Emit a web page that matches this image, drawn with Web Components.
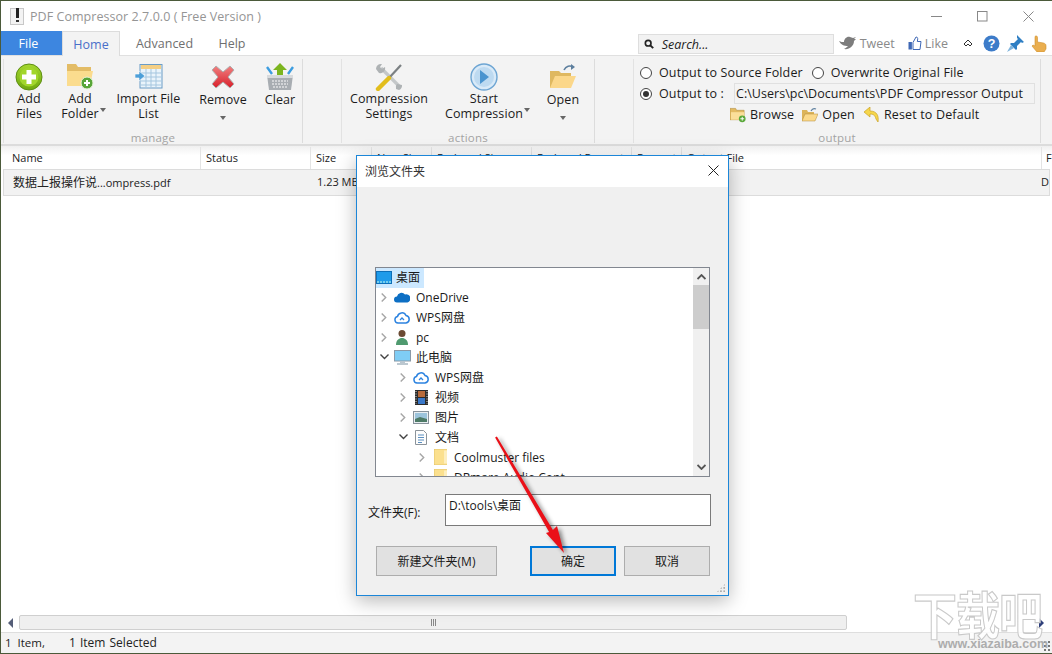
<!DOCTYPE html>
<html><head><meta charset="utf-8">
<style>
html,body{margin:0;padding:0;width:1052px;height:654px;overflow:hidden;background:#fff}
body{font-family:"Open Sans","Noto Sans CJK SC",sans-serif}
</style></head><body>
<pdf-app>
  <title-bar slot="title">PDF Compressor 2.7.0.0 ( Free Version )</title-bar>
  <ribbon-tabs slot="tabs"></ribbon-tabs>
  <ribbon-bar slot="ribbon"></ribbon-bar>
  <file-table slot="table"></file-table>
  <h-scroll slot="scroll"></h-scroll>
  <status-bar slot="status"></status-bar>
  <folder-dialog slot="overlay"></folder-dialog>
  <site-mark slot="overlay"></site-mark>
  <red-arrow slot="overlay"></red-arrow>
</pdf-app>
<script>
const FONT = `"Open Sans","Noto Sans CJK SC",sans-serif`;

const ICONS = {
  add: `<svg width="28" height="28" viewBox="0 0 28 28"><defs><linearGradient id="g1" x1="0" y1="0" x2="0" y2="1"><stop offset="0" stop-color="#a5d82f"/><stop offset="1" stop-color="#6fa80f"/></linearGradient></defs><circle cx="14" cy="14" r="13" fill="url(#g1)" stroke="#5e8e12"/><circle cx="14" cy="14" r="9.5" fill="#a2d62c"/><path d="M14 7v14M7 14h14" stroke="#fff" stroke-width="5"/></svg>`,
  addFolder: `<svg width="28" height="27" viewBox="0 0 28 27"><path d="M1 1h9l2 3h13v18H1z" fill="#e3bc66"/><path d="M1 8h26l-3 15H1z" fill="#fbdc8e"/><circle cx="21" cy="20" r="6" fill="#57a538" stroke="#e8f2d8"/><path d="M21 17v6M18 20h6" stroke="#fff" stroke-width="2"/></svg>`,
  import: `<svg width="28" height="25" viewBox="0 0 28 25"><rect x="5" y=".5" width="22" height="23.500" fill="#eaf4fb" stroke="#6a9cc6"/><rect x="6" y="1" width="20" height="4" fill="#f4cf85"/><path d="M6 9h20M6 13h20M6 17h20M6 21h20M11 5v18M16 5v18M21 5v18" stroke="#a5c6df"/><path d="M0 10h4V7l6 5-6 5v-3H0z" fill="#4d9fd8" stroke="#fff" stroke-width=".6"/></svg>`,
  remove: `<svg width="24" height="24" viewBox="0 0 24 24"><defs><linearGradient id="g2" x1="0" y1="0" x2="0" y2="1"><stop offset="0" stop-color="#f08080"/><stop offset="1" stop-color="#d81f2a"/></linearGradient></defs><path d="M5 1l7 6 7-6 4 4-6 7 6 7-4 4-7-6-7 6-4-4 6-7-6-7z" fill="url(#g2)" stroke="#b0b0b0"/></svg>`,
  clear: `<svg width="28" height="28" viewBox="0 0 28 28"><path d="M14 0l7 7h-4v5h-6V7H7z" fill="#7cb51f"/><path d="M1 4l5 7M27 4l-5 7" stroke="#3c9de0" stroke-width="2.400"/><path d="M1 12h26l-2 15H3z" fill="#a8adb2"/><path d="M1 12h26v3H1z" fill="#d7dadd"/><path d="M6 18h16M6 21h16M7 24h14" stroke="#dfe1e3" stroke-width="1.400" stroke-dasharray="2 1"/></svg>`,
  tools: `<svg width="28" height="28" viewBox="0 0 28 28"><path d="M6 5l19 19" stroke="#c4c7c9" stroke-width="3.200"/><path d="M1 6a5 5 0 0 1 6-5L5 4l2 2 3-2a5 5 0 0 1-6 6z" fill="#aeb2b4"/><path d="M21 26a5 5 0 0 1 1-5l5 1a5 5 0 0 1-3 5z" fill="#aeb2b4"/><path d="M26 2L14 15" stroke="#7b8083" stroke-width="2.200"/><path d="M14 15L3 26" stroke="#e2bd1c" stroke-width="4.400" stroke-linecap="round"/></svg>`,
  play: `<svg width="28" height="28" viewBox="0 0 28 28"><circle cx="14" cy="14" r="13" fill="#d9eaf8" stroke="#6da5d3" stroke-width="1.400"/><circle cx="14" cy="14" r="10" fill="#bddaf1"/><path d="M10 7l9 7-9 7z" fill="#4a94cf"/></svg>`,
  open: `<svg width="28" height="26" viewBox="0 0 28 26"><path d="M1 7h9l2 2h10v15H1z" fill="#dfb860"/><path d="M6 12h21l-5 12H1z" fill="#fbd78a"/><path d="M15 6c2-4 6-5 9-3" fill="none" stroke="#5d7f9e" stroke-width="1.600"/><path d="M22 0l4 3-4 3z" fill="#5d7f9e"/></svg>`,
  search: `<svg width="10" height="10" viewBox="0 0 12 12"><circle cx="5" cy="5" r="3.400" fill="none" stroke="#222" stroke-width="2"/><path d="M7.600 7.600L11 11" stroke="#222" stroke-width="2.400"/></svg>`,
  bird: `<svg width="18" height="14" viewBox="0 0 18 14"><path d="M0 5c2 1 3 1 5 1C5 3 8 0 11 1c1 0 2 1 3 1l3-1-2 2 2 0-2 2c0 5-5 9-10 8 2-1 3-2 4-3C5 10 2 9 0 5z" fill="#7d7d7d"/></svg>`,
  like: `<svg width="14" height="14" viewBox="0 0 14 14"><rect x=".5" y="6" width="3.400" height="7.500" fill="#3f68b5"/><path d="M5 6.500L8 1c1.500 0 2 1 1.600 3l-.3 1.500H13l-1 8H5z" fill="#fff" stroke="#3f68b5"/></svg>`,
  collapse: `<svg width="10" height="8" viewBox="0 0 10 8"><path d="M1 5l4-4 4 4-2 2-2-2-2 2z" fill="none" stroke="#333"/></svg>`,
  help: `<svg width="17" height="17" viewBox="0 0 17 17"><circle cx="8.500" cy="8.500" r="8" fill="#3d7cc9"/><text x="8.500" y="13" text-anchor="middle" font-family="Liberation Sans" font-weight="700" font-size="12.500" fill="#fff">?</text></svg>`,
  pin: `<svg width="17" height="17" viewBox="0 0 17 17"><path d="M10 0l7 7-2 1-1-1-4 4 0 3-1 1-6-6 1-1h3l4-4-1-1z" fill="#2f7fc4"/><path d="M4 10l-4 7 7-4z" fill="#7fb4dd"/></svg>`,
  hand: `<svg width="16" height="17" viewBox="0 0 16 17"><path d="M5 1c1 0 1.500 .5 1.500 1.500V7l6 1c1.500.5 2.500 1 2.500 3v3l-2 3H6L1 11l1-1 2 1V2.500C4 1.500 4 1 5 1z" fill="#eaae4e" stroke="#cf8f2e" stroke-width=".6"/></svg>`,
  browseSm: `<svg width="16" height="16" viewBox="0 0 17 16"><path d="M0 1h6l1 2h8v10H0z" fill="#e3bb62" stroke="#b08b3a" stroke-width=".6"/><path d="M1 5h14v8H1z" fill="#fbdf99"/><circle cx="13" cy="12" r="3.600" fill="#5aa83a"/><path d="M13 10v4M11 12h4" stroke="#fff"/></svg>`,
  openSm: `<svg width="16" height="15" viewBox="0 0 16 15"><path d="M0 3h5l1 2h6v9H0z" fill="#dcb45a"/><path d="M3 7h13l-3 7H0z" fill="#fbd98a" stroke="#b08b3a" stroke-width=".5"/><path d="M9 4c1-2 3-3 5-2" fill="none" stroke="#5d7f9e" stroke-width="1.200"/></svg>`,
  undo: `<svg width="16" height="16" viewBox="0 0 16 16"><path d="M6 0L0 5l6 5V7c3 0 5 1 6 5l2 3c1-6-1-11-8-11z" fill="#f6d64b" stroke="#c9a227" stroke-width=".7"/></svg>`,
};

class PdfApp extends HTMLElement {
  constructor() {
    super();
    this.attachShadow({ mode: 'open' }).innerHTML = `<style>
      :host{display:flex;flex-direction:column;position:relative;width:1052px;height:654px;box-sizing:border-box;
        border-top:1px solid #4b5a3a;border-left:1px solid #4b5a3a;border-bottom:1px solid #4b5a3a;background:#fff;overflow:hidden}
      .grow{flex:1}
    </style>
    <slot name="title"></slot><slot name="tabs"></slot><slot name="ribbon"></slot><slot name="table"></slot>
    <div class="grow"></div><slot name="scroll"></slot><slot name="status"></slot><slot name="overlay"></slot>`;
  }
}

class TitleBar extends HTMLElement {
  constructor() {
    super();
    this.attachShadow({ mode: 'open' }).innerHTML = `<style>
      :host{display:flex;align-items:center;height:30px;background:#fff;color:#959595;font:12.5px ${FONT}}
      svg{margin:0 6px 0 9px}
      .title{flex:1;letter-spacing:.05px}
      .btns{display:flex;align-items:center;margin-right:1px}
      .btns span{width:46px;height:30px;display:flex;align-items:center;justify-content:center}
    </style>
    <svg width="14" height="17" viewBox="0 0 14 17"><rect x=".5" y=".5" width="13" height="16" fill="#f3f3f3" stroke="#c8c8c8"/><path d="M6 0h3v10H6z" fill="#222"/><path d="M6 12h3v2H6z" fill="#333"/></svg>
    <span class="title"><slot></slot></span>
    <div class="btns">
      <span><svg style="margin:0" width="11" height="11"><path d="M0 5.500h11" stroke="#888"/></svg></span>
      <span><svg style="margin:0" width="11" height="11"><rect x=".5" y=".5" width="9.500" height="9.500" fill="none" stroke="#888"/></svg></span>
      <span><svg style="margin:0" width="11" height="11"><path d="M.5.500l10 10M10.500.500l-10 10" stroke="#888"/></svg></span>
    </div>`;
  }
}

class RibbonTabs extends HTMLElement {
  constructor() {
    super();
    const sm = (i, t, c) => `<span class="soc" style="color:${c||'#8a8a8a'}">${ICONS[i]}${t||''}</span>`;
    this.attachShadow({ mode: 'open' }).innerHTML = `<style>
      :host{display:flex;align-items:flex-end;height:25px;background:#fff;font:12.5px ${FONT};box-sizing:border-box;border-bottom:1px solid #e0e0e0}
      .tab{height:24px;display:flex;align-items:center;justify-content:center;box-sizing:border-box;color:#6f6f6f;padding-top:1px}
      .file{width:61px;background:#3d86e0;color:#fff;padding-right:6px}
      .home{width:58px;background:#f3f3f3;border:1px solid #dcdcdc;border-bottom:none;color:#4a6fc9;height:25px;margin-bottom:-1px}
      .adv{width:87px;margin-left:1px}.help{width:48px}
      .gap{flex:1}
      .search{width:196px;height:20px;box-sizing:border-box;background:#f2f2f2;border:1px solid #dedede;display:flex;align-items:center;gap:8px;padding-left:5px;margin-bottom:1px;font:italic 12.5px ${FONT};color:#222}
      .soc{display:flex;align-items:center;gap:3px}
      .right{display:flex;align-items:center;height:24px;margin-left:5px;margin-right:5px}
      svg{display:block}
    </style>
    <div class="tab file">File</div><div class="tab home">Home</div><div class="tab adv">Advanced</div><div class="tab help">Help</div>
    <div class="gap"></div>
    <div class="search">${ICONS.search}<span>Search...</span></div>
    <div class="right">
      ${sm('bird','Tweet')}<span style="width:13px"></span>${sm('like','Like')}<span style="width:15px"></span>
      ${sm('collapse')}<span style="width:10px"></span>${sm('help')}<span style="width:7px"></span>${sm('pin')}<span style="width:7px"></span>${sm('hand')}
    </div>`;
  }
}

class RibbonButton extends HTMLElement {
  constructor() {
    super();
    const lines = (this.getAttribute('label') || '').split('|');
    const drop = this.getAttribute('drop');
    this.attachShadow({ mode: 'open' }).innerHTML = `<style>
      :host{display:flex;flex-direction:column;flex:none;align-items:center;width:var(--w,60px);font:12.5px/15px ${FONT};color:#1b1b1b;padding-top:3px;box-sizing:border-box;letter-spacing:.1px}
      .ic{height:29px;display:flex;align-items:center;justify-content:center}
      .lb{text-align:center;position:relative;white-space:nowrap;margin-top:var(--lm,0)}
      .lb div{position:relative;display:block}
      .d{display:inline-block;width:0;height:0;border:3px solid transparent;border-top:4px solid #666;border-bottom:none}
      .up{position:absolute;right:-7px;top:2px}
      .low{margin-top:9px}
    </style>
    <div class="ic"><slot></slot></div>
    <div class="lb">${lines.map((l, i) => `<div>${l}${drop === 'side' && i === lines.length - 1 ? '<span class="d up"></span>' : ''}</div>`).join('')}</div>
    ${drop === 'below' ? '<span class="d low"></span>' : ''}`;
  }
}

class RibbonGroup extends HTMLElement {
  constructor() {
    super();
    this.attachShadow({ mode: 'open' }).innerHTML = `<style>
      :host{display:flex;flex-direction:column;box-sizing:border-box;height:84px;width:var(--gw);border-left:1px solid #e2e2e2;border-right:1px solid #dcdcdc;margin-right:var(--gm,0);flex:none}
      .c{flex:1;display:flex;padding-left:var(--gp,0)}
      .t{height:15px;margin-bottom:-2px;text-align:center;font:11.5px/15px ${FONT};color:#a3a3a3;letter-spacing:.2px}
    </style>
    <div class="c"><slot></slot></div><div class="t">${this.getAttribute('name')}</div>`;
  }
}

class RibbonBar extends HTMLElement {
  constructor() {
    super();
    const b = (label, icon, w, drop, extra) => `<ribbon-button label="${label}" ${drop ? `drop="${drop}"` : ''} style="--w:${w}px;${extra || ''}">${ICONS[icon]}</ribbon-button>`;
    this.attachShadow({ mode: 'open' }).innerHTML = `<style>
      :host{display:flex;height:90px;background:#f3f3f3;box-sizing:border-box;border-bottom:2px solid #dcdcdc;padding:3px 0 0 2px;font:12.5px ${FONT}}
      .out{display:flex;flex-direction:column;padding-top:3px;color:#1b1b1b;letter-spacing:.15px;font:12.5px/17px ${FONT}}
      .r{display:flex;align-items:center;height:21px;white-space:nowrap}
      .rad{width:12px;height:12px;border:1px solid #444;border-radius:50%;background:#fff;margin-right:7px;box-sizing:border-box;position:relative;flex:none}
      .rad.on::after{content:"";position:absolute;left:2px;top:2px;width:6px;height:6px;border-radius:50%;background:#333}
      .lab{width:75px;flex:none}
      .path{width:301px;height:21px;box-sizing:border-box;border:1px solid #e0e0e0;padding-left:1px;line-height:19px;white-space:nowrap;letter-spacing:.03px}
      .lnk{display:flex;align-items:center;gap:4px}
      .acts{padding-left:90px;gap:8px}
    </style>
    <ribbon-group name="manage" style="--gw:300px;--gm:38px;--gp:0px">
      ${b('Add|Files','add',50)}${b('Add|Folder','addFolder',52,'side')}${b('Import File|List','import',85)}
      ${b('Remove','remove',64,'below','--lm:1px')}${b('Clear','clear',50,'','--lm:1px')}
    </ribbon-group>
    <ribbon-group name="actions" style="--gw:254px;--gm:38px;--gp:5px">
      ${b('Compression|Settings','tools',84)}${b('Start|Compression','play',106,'side')}${b('Open','open',52,'below','--lm:1px')}
    </ribbon-group>
    <ribbon-group name="output" style="--gw:408px;--gp:6px">
      <div class="out">
        <div class="r"><span class="rad"></span>Output to Source Folder<span class="rad" style="margin-left:9px"></span>Overwrite Original File</div>
        <div class="r"><span class="rad on"></span><span class="lab">Output to :</span><span class="path">C:\\Users\\pc\\Documents\\PDF Compressor Output</span></div>
        <div class="r acts">
          <span class="lnk">${ICONS.browseSm}Browse</span>
          <span class="lnk">${ICONS.openSm}Open</span>
          <span class="lnk" style="margin-left:1px">${ICONS.undo}Reset to Default</span>
        </div>
      </div>
    </ribbon-group>`;
  }
}

class FileTable extends HTMLElement {
  constructor() {
    super();
    const cols = [['Name',200],['Status',110],['Size',61],['New Size',60],['Reduced Size',100],['Reduced Percent',100],['Percent',50],['Output File',360]];
    this.attachShadow({ mode: 'open' }).innerHTML = `<style>
      :host{display:block;font:11px ${FONT};color:#222}
      .h{display:flex;height:23px;background:linear-gradient(#f0f0f0,#fff 40%,#fff);box-sizing:border-box;padding-top:1px}
      .h div{border-right:1px solid #e4e4e4;padding:3px 0 0 5px;box-sizing:border-box;white-space:nowrap;overflow:hidden;flex:none}
      .h div:first-child{padding-left:11px}
      .h .last{border:none;width:10px;padding-left:4px}
      .row{display:flex;height:27px;margin:0 0 0 2px;width:1047px;background:#f2f2f2;border:1px solid #dcdcdc;box-sizing:border-box;align-items:center;padding-bottom:2px}
      .row span{white-space:nowrap}
      .nm{width:313px;padding-left:9px;box-sizing:border-box}
      .cj{font-size:12px}
      .d{flex:1;text-align:right}
    </style>
    <div class="h">${cols.map(c => `<div style="width:${c[1]}px">${c[0]}</div>`).join('')}<div class="last">F</div></div>
    <div class="row"><span class="nm"><span class="cj">数据上报操作说</span>...ompress.pdf</span><span>1.23 MB</span><span class="d">D</span></div>`;
  }
}

class HScroll extends HTMLElement {
  constructor() {
    super();
    this.attachShadow({ mode: 'open' }).innerHTML = `<style>
      :host{display:flex;align-items:center;height:15px;margin-bottom:2px;padding:0 0 0 7px}
      .t{width:0;height:0;border-top:5px solid transparent;border-bottom:5px solid transparent}
      .bar{width:828px;height:15px;margin:0 0 0 6px;box-sizing:border-box;border:1px solid #cfcfcf;border-radius:2px;background:#efefef;display:flex;align-items:center;justify-content:center}
      .g{width:5px;height:7px;background:repeating-linear-gradient(90deg,#888 0 1px,transparent 1px 2px)}
      .gap{flex:1}
    </style>
    <div class="t" style="border-right:5px solid #555e78"></div>
    <div class="bar"><span class="g"></span></div><div class="gap"></div>
    <div class="t" style="border-left:5px solid #2e3f7a;margin-right:8px"></div>`;
  }
}

class StatusBar extends HTMLElement {
  constructor() {
    super();
    this.attachShadow({ mode: 'open' }).innerHTML = `<style>
      :host{display:flex;align-items:center;height:21px;background:#f3f3f3;border-top:1px solid #dedede;font:11.5px ${FONT};color:#222;padding:0 0 2px 4px;box-sizing:border-box;position:relative}
      .a{word-spacing:3px}
      .b{margin-left:24px;font-size:12px;word-spacing:1px}
      .grip{position:absolute;right:1px;bottom:1px;width:8px;height:12px;background:radial-gradient(circle,#777 0 1px,transparent 1px) 0 0/4px 4px}
    </style><span class="a">1 Item,</span><span class="b">1 Item Selected</span><span class="grip"></span>`;
  }
}

class TreeRow extends HTMLElement {
  constructor() {
    super();
    const level = +this.getAttribute('level') || 0;
    const st = this.getAttribute('state');
    const arrow = st === 'open'
      ? `<svg width="9" height="6" viewBox="0 0 9 6"><path d="M.5.500l4 4 4-4" fill="none" stroke="#444" stroke-width="1.400"/></svg>`
      : st === 'closed' ? `<svg width="6" height="9" viewBox="0 0 6 9"><path d="M.7.500l4 4-4 4" fill="none" stroke="#a6a6a6" stroke-width="1.400"/></svg>` : '';
    this.attachShadow({ mode: 'open' }).innerHTML = `<style>
      :host{display:flex;align-items:center;height:20px;box-sizing:border-box;padding:0 0 2px ${level * 19}px;font:12px ${FONT};color:#1a1a1a;white-space:nowrap}
      .a{width:16px;display:flex;justify-content:center;flex:none}
      .i{width:20px;display:flex;justify-content:center;align-items:center;flex:none}
      .t{margin-left:3px;padding:0 1px}
      .w{display:flex;align-items:center}
      :host([selected]){padding-bottom:0}
      :host([selected]) .a{display:none}
      :host([selected]) .i{width:16px}
      :host([selected]) .w{background:#cce8ff;height:20px;box-sizing:border-box;padding:0 3px 2px 0}
    </style><span class="a">${arrow}</span><span class="w"><span class="i"><slot name="icon"></slot></span><span class="t"><slot></slot></span></span>`;
  }
}

const TREE = {
  desk: `<svg width="16" height="13" viewBox="0 0 16 13"><rect x=".5" y=".5" width="15" height="12" fill="#1f9bea" stroke="#0d6fb8"/><path d="M1 11h14" stroke="#cfe" stroke-dasharray="2 1"/></svg>`,
  cloud: `<svg width="16" height="11" viewBox="0 0 16 11"><path d="M3 10.500a3 3 0 0 1 0-6 4.500 4.500 0 0 1 8-2 3.500 3.500 0 0 1 2.500 8z" fill="#0d6fc4"/></svg>`,
  wps: `<svg width="16" height="13" viewBox="0 0 16 13"><path d="M4 12a3.300 3.300 0 0 1-.5-6.500 4.500 4.500 0 0 1 8.500-1A3.800 3.800 0 0 1 12 12z" fill="#fff" stroke="#2c83e0" stroke-width="1.500"/><path d="M6 9l2-2 2 2" fill="none" stroke="#2c83e0" stroke-width="1.300"/></svg>`,
  user: `<svg width="14" height="16" viewBox="0 0 14 16"><circle cx="7" cy="4.500" r="3.500" fill="#6b4a33"/><path d="M1 16c0-5 3-7 6-7s6 2 6 7z" fill="#4f9a6f"/></svg>`,
  pc: `<svg width="17" height="15" viewBox="0 0 17 15"><rect x=".5" y=".5" width="16" height="10.500" fill="#7fcdf5" stroke="#8a9aa8"/><path d="M6 11h5v2H6z" fill="#b9c6cf"/><path d="M3 14h11" stroke="#9fb0bc" stroke-width="1.400"/></svg>`,
  video: `<svg width="13" height="15" viewBox="0 0 13 15"><rect width="13" height="15" fill="#2b2b2b"/><rect x="3" y="1" width="7" height="6" fill="#b86a3a"/><rect x="3" y="8" width="7" height="6" fill="#3a78c9"/><path d="M1 1v13M12 1v13" stroke="#ddd" stroke-dasharray="1 1.500"/></svg>`,
  pic: `<svg width="16" height="13" viewBox="0 0 16 13"><rect x=".5" y=".5" width="15" height="12" fill="#e9eef2" stroke="#87929b"/><rect x="2" y="2" width="12" height="9" fill="#9cc4dc"/><path d="M2 8l5-2 7 2v3H2z" fill="#4d7a66"/></svg>`,
  doc: `<svg width="12" height="15" viewBox="0 0 12 15"><path d="M.5.500h8l3 3v11H.500z" fill="#fdfdfd" stroke="#8b939a"/><path d="M3 5h6M3 7.500h6M3 10h6M3 12.500h4" stroke="#5b8fc0"/></svg>`,
  folder: `<svg width="13" height="16" viewBox="0 0 13 16"><path d="M0 0h13v16H0z" fill="#fbe08e"/><path d="M10 1.500h3v13h-3z" fill="#fdeebd"/><path d="M0 0h13M0 16h13M0 0v16" stroke="#e0bf62" stroke-width=".8"/></svg>`,
};

class FolderDialog extends HTMLElement {
  constructor() {
    super();
    const rows = [
      [0,'','desk','桌面','selected'],[0,'closed','cloud','OneDrive'],[0,'closed','wps','WPS网盘'],[0,'closed','user','pc'],
      [0,'open','pc','此电脑'],[1,'closed','wps','WPS网盘'],[1,'closed','video','视频'],[1,'closed','pic','图片'],
      [1,'open','doc','文档'],[2,'closed','folder','Coolmuster files'],[2,'closed','folder','DRmare Audio Cont'],
    ];
    this.attachShadow({ mode: 'open' }).innerHTML = `<style>
      :host{position:absolute;left:355px;top:154px;width:373px;height:441px;box-sizing:border-box;background:#f0f0f0;border:1px solid #1c86d8;
        box-shadow:0 5px 18px rgba(0,0,0,.28);display:flex;flex-direction:column;font:12px ${FONT};color:#1a1a1a}
      .tb{height:31px;background:#fff;display:flex;align-items:center;padding:0 0 2px 8px;box-sizing:border-box;flex:none;color:#333}
      .tb span{flex:1}
      .tb svg{margin-right:9px}
      .body{flex:1;display:flex;flex-direction:column;padding:80px 18px 0 18px}
      .tree{height:210px;box-sizing:border-box;border:1px solid #828790;background:#fff;display:flex;overflow:hidden}
      .list{flex:1;overflow:hidden}
      .sb{width:16px;background:#f0f0f0;display:flex;flex-direction:column;align-items:center;justify-content:space-between;position:relative;padding:6px 0;box-sizing:border-box}
      .thumb{position:absolute;top:17px;left:0;width:16px;height:44px;background:#cdcdcd}
      .f{display:flex;align-items:flex-start;margin-top:17px}
      .f label{width:70px;padding-top:9px;white-space:nowrap;font-size:12px;box-sizing:border-box;margin-left:-7px;flex:none}
      .f .in{width:266px;height:32px;box-sizing:border-box;border:1px solid #7a7a7a;background:#fff;padding:1px 3px;margin-left:7px;margin-right:-1px}
      .bt{display:flex;margin-top:20px}
      .b{height:30px;box-sizing:border-box;border:1px solid #adadad;background:#e1e1e1;display:flex;align-items:center;justify-content:center}
      .grip{position:absolute;right:2px;bottom:2px;width:10px;height:10px;background:radial-gradient(circle,#aaa 0 1px,transparent 1px) 0 0/3.300px 3.300px;clip-path:polygon(100% 0,100% 100%,0 100%)}
    </style>
    <div class="tb"><span>浏览文件夹</span><svg width="11" height="11"><path d="M.5.500l10 10M10.500.500l-10 10" stroke="#222"/></svg></div>
    <div class="body">
      <div class="tree">
        <div class="list">${rows.map(r => `<tree-row level="${r[0]}" state="${r[1]}" ${r[4] || ''}><span slot="icon" style="display:flex">${TREE[r[2]]}</span>${r[3]}</tree-row>`).join('')}</div>
        <div class="sb"><svg width="9" height="6" viewBox="0 0 9 6"><path d="M.5 5l4-4 4 4" fill="none" stroke="#555" stroke-width="1.800"/></svg><span class="thumb"></span><svg width="9" height="6" viewBox="0 0 9 6"><path d="M.5 1l4 4 4-4" fill="none" stroke="#555" stroke-width="1.800"/></svg></div>
      </div>
      <div class="f"><label>文件夹(F):</label><div class="in">D:\\tools\\桌面</div></div>
      <div class="bt">
        <div class="b" style="width:121px;margin-left:1px">新建文件夹(M)</div>
        <div class="b" style="width:86px;margin-left:33px;border:2px solid #0078d7">确定</div>
        <div class="b" style="width:86px;margin-left:8px">取消</div>
      </div>
    </div><span class="grip"></span>`;
  }
}

class RedArrow extends HTMLElement {
  constructor() {
    super();
    this.attachShadow({ mode: 'open' }).innerHTML = `<style>
      :host{position:absolute;left:485px;top:425px;width:95px;height:140px;pointer-events:none}
      svg{filter:drop-shadow(3px 2px 2px rgba(0,0,0,.45));overflow:visible}
    </style>
    <svg width="95" height="140" viewBox="0 0 95 140"><path d="M10.900 10.500L66.900 103.900L71 100L78 127L60 107L63.100 106.100L9.100 11.500Z" fill="#ea1018"/></svg>`;
  }
}

class SiteMark extends HTMLElement {
  constructor() {
    super();
    this.attachShadow({ mode: 'open' }).innerHTML = `<style>
      :host{position:absolute;left:905px;top:580px;width:146px;height:71px;pointer-events:none}
      .z{position:absolute;left:7px;top:-2px;font:700 44px/60px "Noto Sans CJK SC",sans-serif;letter-spacing:-1px;-webkit-text-stroke:1px #c9c9c9;color:rgba(255,255,255,.85);white-space:nowrap;transform:scaleY(1.15);transform-origin:top left}
      .u{position:absolute;left:32px;bottom:1px;font:700 12.5px "Liberation Sans",sans-serif;color:#adadad;white-space:nowrap}
    </style><span class="z">下载吧</span><span class="u">www.xiazaiba.com</span>`;
  }
}

customElements.define('pdf-app', PdfApp);
customElements.define('title-bar', TitleBar);
customElements.define('ribbon-tabs', RibbonTabs);
customElements.define('ribbon-button', RibbonButton);
customElements.define('ribbon-group', RibbonGroup);
customElements.define('ribbon-bar', RibbonBar);
customElements.define('file-table', FileTable);
customElements.define('h-scroll', HScroll);
customElements.define('status-bar', StatusBar);
customElements.define('tree-row', TreeRow);
customElements.define('folder-dialog', FolderDialog);
customElements.define('red-arrow', RedArrow);
customElements.define('site-mark', SiteMark);
</script>
</body></html>
